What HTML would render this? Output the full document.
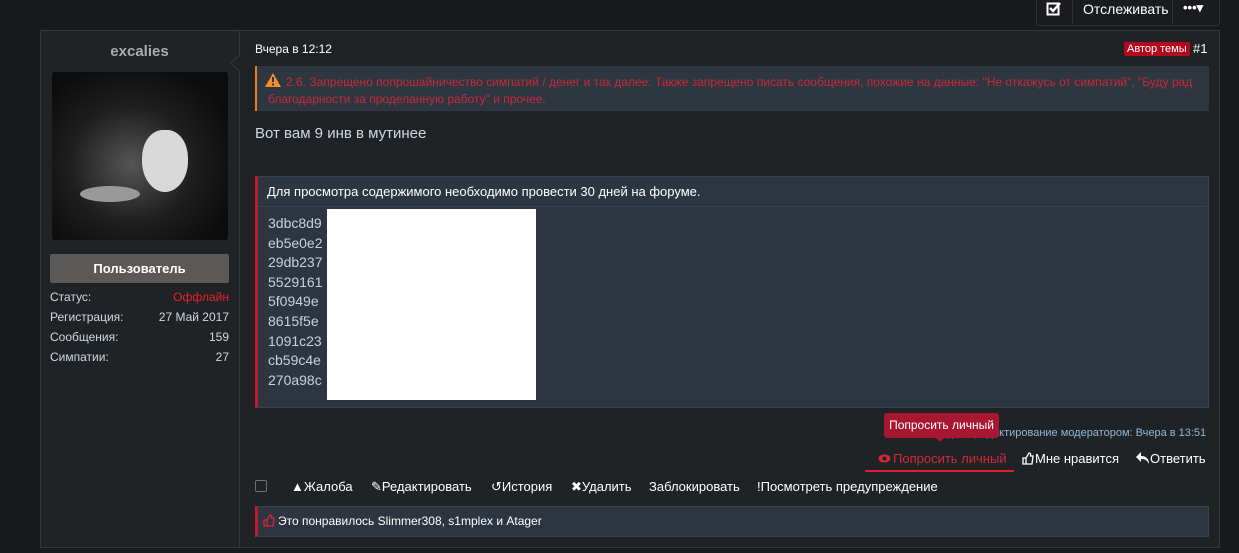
<!DOCTYPE html>
<html><head><meta charset="utf-8"><style>
body{margin:0;width:1239px;height:553px;background:#17191c;font-family:"Liberation Sans",sans-serif;position:relative;overflow:hidden;color:#fff}
.a{position:absolute}
.top{left:1036px;top:-6px;width:182px;height:30px;border:1px solid #2e3236;border-radius:4px;background:#191b1e}
.box{left:40px;top:30px;width:1178px;height:516px;background:#202326;border:1px solid #34383c}
.side{left:40px;top:30px;width:199px;height:517px;border-right:1px solid #34383c}
.s{font-size:12px;color:#cfd8e0}
.r{text-align:right}
.act{position:absolute;top:479px;font-size:13px}
</style></head><body>
<div class="a top"></div>
<div class="a" style="left:1072px;top:0;width:1px;height:24px;background:#2e3236"></div>
<div class="a" style="left:1172px;top:0;width:1px;height:24px;background:#2e3236"></div>
<svg class="a" style="left:1046px;top:1px" width="16" height="15" viewBox="0 0 16 15"><rect x="1.5" y="2.5" width="11" height="11" fill="none" stroke="#fff" stroke-width="2"/><path d="M4 7l3 3 7-8" fill="none" stroke="#fff" stroke-width="2.4"/></svg>
<div class="a" style="left:1083px;top:1px;font-size:14px">Отслеживать</div>
<div class="a" style="left:1183px;top:0px;font-size:13px;font-weight:bold">•••▾</div>
<div class="a box"></div>
<div class="a side"></div>
<svg class="a" style="left:229px;top:55px" width="12" height="16"><path d="M11 0L1 8l10 8" fill="#202326" stroke="#34383c"/></svg>
<div class="a" style="left:40px;top:43px;width:199px;text-align:center;font-size:15px;font-weight:bold;color:#a7acb0">excalies</div>
<div class="a" style="left:52px;top:72px;width:176px;height:168px;border-radius:3px;background:radial-gradient(ellipse at 45% 55%,#555 0%,#1e1e1e 45%,#0c0c0c 80%)"></div>
<div class="a" style="left:142px;top:130px;width:46px;height:62px;border-radius:45% 45% 50% 50%;background:#d9d9d9"></div>
<div class="a" style="left:80px;top:186px;width:60px;height:16px;border-radius:50%;background:#999"></div>
<div class="a" style="left:50px;top:254px;width:179px;height:29px;background:#5b5957;border-radius:2px;text-align:center;line-height:29px;font-size:13px;font-weight:bold">Пользователь</div>
<div class="a s" style="left:50px;top:290px">Статус:</div><div class="a s r" style="left:130px;top:290px;width:99px;color:#e8212c">Оффлайн</div>
<div class="a s" style="left:50px;top:310px">Регистрация:</div><div class="a s r" style="left:130px;top:310px;width:99px">27 Май 2017</div>
<div class="a s" style="left:50px;top:330px">Сообщения:</div><div class="a s r" style="left:130px;top:330px;width:99px">159</div>
<div class="a s" style="left:50px;top:350px">Симпатии:</div><div class="a s r" style="left:130px;top:350px;width:99px">27</div>

<div class="a" style="left:255px;top:42px;font-size:12px">Вчера в 12:12</div>
<div class="a" style="left:1124px;top:42px;font-size:11px;background:#b3091f;padding:1px 3px;border-radius:2px">Автор темы</div>
<div class="a" style="left:1193px;top:41px;font-size:13px">#1</div>
<div class="a" style="left:255px;top:66px;width:952px;height:45px;background:#2e3640;border-left:2px solid #e87e1c"></div>
<svg class="a" style="left:265px;top:73px" width="16" height="14"><path d="M8 0L16 14H0z" fill="#f0902a"/><rect x="7" y="4" width="2" height="5" fill="#2e3640"/><rect x="7" y="10.5" width="2" height="2" fill="#2e3640"/></svg>
<div class="a" style="left:268px;top:74px;width:936px;font-size:12px;line-height:17px;color:#c72a39;text-indent:18px">2.6. Запрещено попрошайничество симпатий / денег и так далее. Также запрещено писать сообщения, похожие на данные: "Не откажусь от симпатий", "Буду рад благодарности за проделанную работу" и прочее.</div>
<div class="a" style="left:255px;top:125px;font-size:15px;color:#cfd8e0">Вот вам 9 инв в мутинее</div>
<div class="a" style="left:255px;top:176px;width:950px;height:230px;background:#2d3640;border:1px solid #3a434c;border-left:3px solid #c01a30"></div>
<div class="a" style="left:258px;top:206px;width:948px;height:1px;background:#3a434c"></div>
<div class="a" style="left:267px;top:184px;font-size:13px">Для просмотра содержимого необходимо провести 30 дней на форуме.</div>
<div class="a" style="left:268px;top:214px;font-size:14px;line-height:19.6px;color:#c4d2e0">3dbc8d9<br>eb5e0e2<br>29db237<br>5529161<br>5f0949e<br>8615f5e<br>1091c23<br>cb59c4e<br>270a98c</div>
<div class="a" style="left:327px;top:209px;width:209px;height:191px;background:#fff"></div>
<div class="a" style="left:915px;top:427px;font-size:11px;color:#8fb7d8">Последнее редактирование модератором: Вчера в 13:51</div>
<div class="a" style="left:884px;top:413px;width:115px;height:25px;background:#a9162f;border-radius:3px;font-size:12px;line-height:24px;text-align:center">Попросить личный</div>
<div class="a" style="left:935px;top:437px;width:0;height:0;border:5px solid transparent;border-top-color:#a9162f"></div>
<svg class="a" style="left:878px;top:454px" width="13" height="9"><ellipse cx="6.5" cy="4.5" rx="6" ry="4" fill="#d3283a"/><circle cx="6.5" cy="4.5" r="2" fill="#202326"/></svg>
<div class="a" style="left:893px;top:451px;font-size:13px;color:#d3283a">Попросить личный</div>
<div class="a" style="left:865px;top:470px;width:149px;height:2px;background:#e0202c;border-radius:1px"></div>
<svg class="a" style="left:1022px;top:452px" width="12" height="13"><path d="M1 6h3v6H1zM4 6l3-5c1.5 0 2 1 1.5 3H11l-1 8H4z" fill="none" stroke="#fff" stroke-width="1.3"/></svg>
<div class="a" style="left:1035px;top:451px;font-size:13px">Мне нравится</div>
<svg class="a" style="left:1136px;top:452px" width="13" height="12"><path d="M5 0L0 5l5 5V7c4 0 6 1 8 5 0-5-3-8-8-8z" fill="#fff"/></svg>
<div class="a" style="left:1150px;top:451px;font-size:13px">Ответить</div>
<div class="a" style="left:255px;top:480px;width:10px;height:10px;border:1px solid #69727c;border-radius:2px"></div>
<div class="act" style="left:291px">▲Жалоба</div>
<div class="act" style="left:371px">✎Редактировать</div>
<div class="act" style="left:491px">↺История</div>
<div class="act" style="left:571px">✖Удалить</div>
<div class="act" style="left:649px">Заблокировать</div>
<div class="act" style="left:757px">!Посмотреть предупреждение</div>
<div class="a" style="left:255px;top:506px;width:950px;height:29px;background:#2d3640;border:1px solid #3a434c;border-left:3px solid #c01a30"></div>
<svg class="a" style="left:263px;top:514px" width="12" height="13"><path d="M1 6h3v6H1zM4 6l3-5c1.5 0 2 1 1.5 3H11l-1 8H4z" fill="none" stroke="#d3283a" stroke-width="1.3"/></svg>
<div class="a" style="left:278px;top:514px;font-size:12px">Это понравилось Slimmer308, s1mplex и Atager</div>
</body></html>
